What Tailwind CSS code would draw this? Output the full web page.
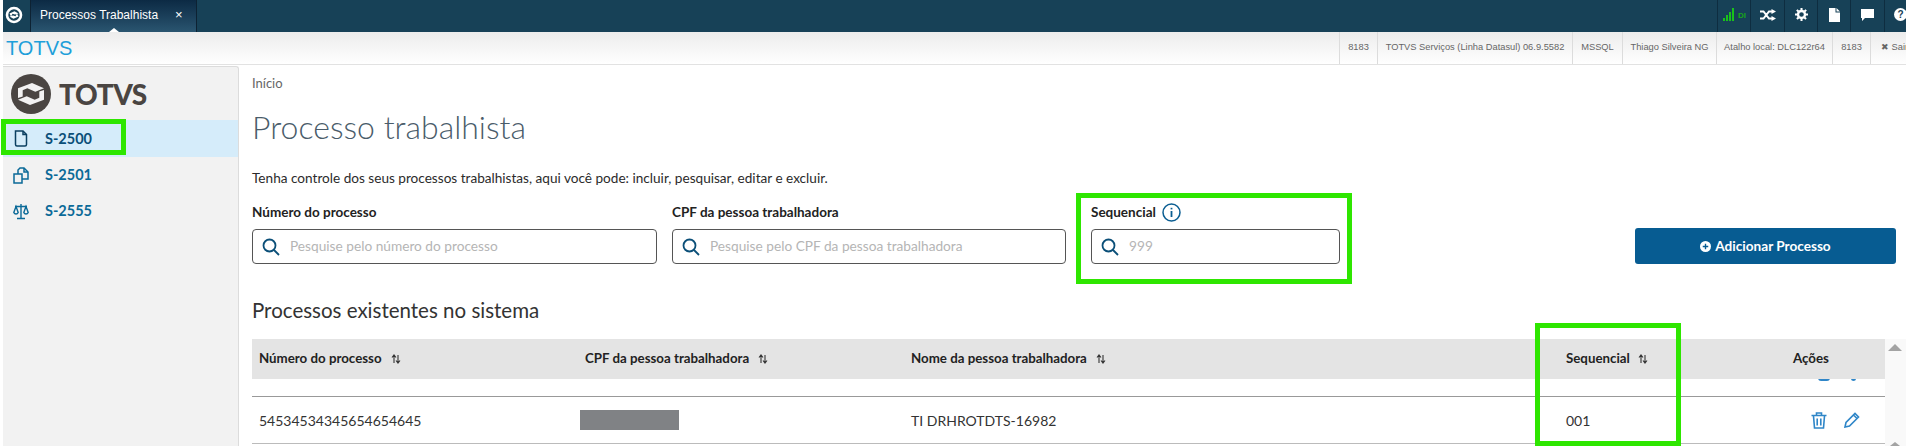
<!DOCTYPE html>
<html lang="pt">
<head>
<meta charset="utf-8">
<script src="https://cdn.jsdelivr.net/npm/@tailwindcss/browser@4"></script>
</head>
<body class="bg-white">
<div class="relative w-[1906px] h-[446px] overflow-hidden bg-white flex flex-col font-['Lato',sans-serif]">

  <!-- top dark bar -->
  <header class="ml-[3px] h-[32px] shrink-0 bg-[#174157] flex items-stretch font-['Liberation_Sans',sans-serif]">
    <div class="w-[27px] flex items-center pl-[2px] pb-[2px]">
      <svg width="18" height="18" viewBox="0 0 18 18"><circle cx="9" cy="9" r="7" fill="none" stroke="#fff" stroke-width="2.600"/><path d="M4.500 7.500 L9.500 5.300 L13.500 7.500 L10 8.500 L7.500 7.800 L6 10.500 Z M13.500 10.500 L8.500 12.700 L4.500 10.500 L8 9.500 L10.500 10.200 L12 7.500 Z" fill="#fff"/></svg>
    </div>
    <div class="relative w-[167px] bg-gradient-to-b from-[#0c2a44] to-[#2a5570] border-x border-[#0d2233] flex items-center pl-[9px] pb-[2px] text-white text-[12px]">
      <span>Processos Trabalhista</span>
      <span class="absolute left-[144px] top-[8px] text-[13px] leading-none">×</span>
      <span class="absolute left-[78px] bottom-0 w-0 h-0 border-x-[5px] border-x-transparent border-b-[4px] border-b-white"></span>
    </div>
    <div class="ml-auto flex items-stretch">
      <div class="w-[33px] border-l border-[#0e2d40] flex items-center pl-[5px] gap-[3px] pb-[4px]">
        <svg width="12" height="13" viewBox="0 0 12 13"><rect x="0" y="10" width="2" height="3" fill="#19c21a"/><rect x="3" y="7" width="2" height="6" fill="#19c21a"/><rect x="6" y="4" width="2" height="9" fill="#19c21a"/><rect x="9" y="0" width="2" height="13" fill="#19c21a"/></svg>
        <span class="text-[8px] text-[#19a81a] font-bold mt-[3px]">DI</span>
      </div>
      <div class="w-[34px] border-l border-[#0e2d40] flex items-center justify-center pb-[3px]">
        <svg width="16" height="12" viewBox="0 0 16 12"><path d="M0 2.500 H3.500 L9 9.500 H12 M0 9.500 H3.500 L9 2.500 H12" fill="none" stroke="#fff" stroke-width="2"/><path d="M11.500 0 L16 2.500 L11.500 5 Z M11.500 7 L16 9.500 L11.500 12 Z" fill="#fff"/></svg>
      </div>
      <div class="w-[33px] border-l border-[#0e2d40] flex items-center justify-center pb-[3px]">
        <svg width="13" height="13" viewBox="0 0 14 14"><circle cx="7" cy="7" r="3.800" fill="none" stroke="#fff" stroke-width="2.600"/><path d="M7 0 V14 M0 7 H14 M2 2 L12 12 M12 2 L2 12" stroke="#fff" stroke-width="2.200" stroke-dasharray="2.400 9.200"/></svg>
      </div>
      <div class="w-[33px] border-l border-[#0e2d40] flex items-center justify-center pb-[3px]">
        <svg width="11" height="14" viewBox="0 0 11 14"><path d="M0 0 H6.500 V4.500 H11 V14 H0 Z M7.500 0 L11 3.500 H7.500 Z" fill="#fff"/></svg>
      </div>
      <div class="w-[34px] border-l border-[#0e2d40] flex items-center justify-center pb-[2px]">
        <svg width="13" height="12" viewBox="0 0 13 12"><path d="M0 0 H13 V9 H4 L1 12 V9 H0 Z" fill="#fff"/></svg>
      </div>
      <div class="w-[22px] border-l border-[#0e2d40] flex items-center pl-[9px] pb-[3px] overflow-hidden">
        <span class="w-[13px] h-[13px] shrink-0 rounded-full bg-white text-[#174157] text-[10px] font-bold leading-[13px] text-center">?</span>
      </div>
    </div>
  </header>

  <!-- second bar -->
  <div class="ml-[3px] h-[33px] shrink-0 bg-gradient-to-b from-[#ececec] to-white border-b border-[#e2e2e2] flex items-stretch font-['Liberation_Sans',sans-serif]">
    <span class="ml-[3px] self-center text-[20px] leading-none text-[#1e9fda]">TOTVS</span>
    <div class="ml-auto flex items-stretch text-[9.300px] text-[#666] whitespace-nowrap">
      <div class="w-[38px] border-l border-[#dcdcdc] flex items-center justify-center">8183</div>
      <div class="w-[195px] border-l border-[#dcdcdc] flex items-center justify-center">TOTVS Serviços (Linha Datasul) 06.9.5582</div>
      <div class="w-[50px] border-l border-[#dcdcdc] flex items-center justify-center">MSSQL</div>
      <div class="w-[94px] border-l border-[#dcdcdc] flex items-center justify-center">Thiago Silveira NG</div>
      <div class="w-[116px] border-l border-[#dcdcdc] flex items-center justify-center">Atalho local: DLC122r64</div>
      <div class="w-[38px] border-l border-[#dcdcdc] flex items-center justify-center">8183</div>
      <div class="w-[36px] border-l border-[#dcdcdc] flex items-center pl-[10px] overflow-hidden"><span>✖&nbsp;Sair</span></div>
    </div>
  </div>

  <!-- body -->
  <div class="flex flex-1 min-h-0 pt-[1px]">
    <!-- sidebar -->
    <aside class="ml-[3px] w-[236px] shrink-0 bg-[#f2f2f2] border-r border-t border-[#dcdcdc] rounded-tr-[3px] flex flex-col">
      <div class="h-[53px] pl-[8px] pt-[7px] flex items-start gap-[8px]">
        <svg width="40" height="40" viewBox="0 0 40 40"><circle cx="20" cy="20" r="20" fill="#4a4542"/><path d="M7 14.300 L21 9 L33 14.300 L24.300 17.700 L16.300 14.300 L11.700 16.300 V22.500 L7 24 Z" fill="#f2f2f2"/><path d="M33 25.700 L19 31 L7 25.700 L15.700 22.300 L23.700 25.700 L28.300 23.700 V17.500 L33 16 Z" fill="#f2f2f2"/></svg>
        <span class="mt-[4px] text-[28px] leading-[32px] font-black tracking-[-0.4px] text-[#4a4542]">TOTVS</span>
      </div>
      <nav class="flex flex-col text-[14.500px] font-bold text-[#0b6a98]">
        <div class="h-[37px] bg-[#d5ecfa] flex items-center pl-[10px] gap-[16px] text-[#0b4f78]">
          <svg width="16" height="17" viewBox="0 0 16 17" fill="none" stroke="#0b3f60" stroke-width="1.500"><path d="M2.500 1 H10 L13.500 4.500 V14.500 A1.500 1.500 0 0 1 12 16 H4 A1.500 1.500 0 0 1 2.500 14.500 Z"/><path d="M10 1 V4.500 H13.500"/></svg>
          <span>S-2500</span>
        </div>
        <div class="h-[36px] flex items-center pl-[10px] gap-[16px]">
          <svg width="16" height="17" viewBox="0 0 16 17" fill="none" stroke="#0b6a98" stroke-width="1.500"><path d="M1 7 H9 V16 H1 Z"/><path d="M5 7 V3 L7 1 H11 L15 5 V12 H9"/><path d="M11 1 V5 H15"/></svg>
          <span>S-2501</span>
        </div>
        <div class="h-[36px] flex items-center pl-[10px] gap-[16px]">
          <svg width="16" height="17" viewBox="0 0 16 17" fill="none" stroke="#0b6a98" stroke-width="1.400"><path d="M8 1 V15 M4 15.500 H12 M2 3.500 H14"/><path d="M3 3.500 L0.800 9.500 A2.400 2.400 0 0 0 5.200 9.500 Z M13 3.500 L10.800 9.500 A2.400 2.400 0 0 0 15.200 9.500 Z"/></svg>
          <span>S-2555</span>
        </div>
      </nav>
    </aside>

    <!-- main -->
    <main class="flex-1 min-w-0 flex flex-col pl-[13px]">
      <p class="mt-[8px] text-[13px] leading-[18px] text-[#666]">Início</p>
      <h1 class="mt-[13px] text-[32px] leading-[44px] font-light text-[#4a5c6a]">Processo trabalhista</h1>
      <p class="mt-[19px] text-[13.600px] leading-[20px] text-[#2b2b2b]">Tenha controle dos seus processos trabalhistas, aqui você pode: incluir, pesquisar, editar e excluir.</p>

      <div class="mt-[14px] flex items-end pr-[10px]">
        <div class="w-[405px]">
          <label class="block text-[13.500px] leading-[20px] font-bold text-[#222]">Número do processo</label>
          <div class="mt-[7px] h-[35px] border border-[#555] rounded-[4px] flex items-center pl-[9px] gap-[10px] text-[13.700px] text-[#b5b5b5]">
            <svg width="18" height="18" viewBox="0 0 18 18" fill="none" stroke="#0b4f78" stroke-width="1.800"><circle cx="7.500" cy="7.500" r="6"/><path d="M12 12 L17 17"/></svg>
            <span>Pesquise pelo número do processo</span>
          </div>
        </div>
        <div class="ml-[15px] w-[394px]">
          <label class="block text-[13.500px] leading-[20px] font-bold text-[#222]">CPF da pessoa trabalhadora</label>
          <div class="mt-[7px] h-[35px] border border-[#555] rounded-[4px] flex items-center pl-[9px] gap-[10px] text-[13.700px] text-[#b5b5b5]">
            <svg width="18" height="18" viewBox="0 0 18 18" fill="none" stroke="#0b4f78" stroke-width="1.800"><circle cx="7.500" cy="7.500" r="6"/><path d="M12 12 L17 17"/></svg>
            <span>Pesquise pelo CPF da pessoa trabalhadora</span>
          </div>
        </div>
        <div class="ml-[25px] w-[249px]">
          <div class="flex items-center gap-[6px] h-[20px]">
            <label class="text-[13.500px] leading-[20px] font-bold text-[#222]">Sequencial</label>
            <svg width="19" height="19" viewBox="0 0 19 19" fill="none" stroke="#0b5e92" stroke-width="1.500"><circle cx="9.500" cy="9.500" r="8.500"/><path d="M9.500 8 V14" stroke-width="1.800"/><path d="M9.500 4.800 V6.400" stroke-width="1.800"/></svg>
          </div>
          <div class="mt-[7px] h-[35px] border border-[#555] rounded-[4px] flex items-center pl-[9px] gap-[10px] text-[13.700px] text-[#b5b5b5]">
            <svg width="18" height="18" viewBox="0 0 18 18" fill="none" stroke="#0b4f78" stroke-width="1.800"><circle cx="7.500" cy="7.500" r="6"/><path d="M12 12 L17 17"/></svg>
            <span>999</span>
          </div>
        </div>
        <button class="ml-auto w-[261px] h-[36px] bg-[#075c92] rounded-[3px] text-white text-[13.600px] font-bold flex items-center justify-center gap-[4px]">
          <svg width="11" height="11" viewBox="0 0 12 12"><circle cx="6" cy="6" r="6" fill="#fff"/><path d="M3 6 H9 M6 3 V9" stroke="#075c92" stroke-width="1.500"/></svg>
          <span>Adicionar Processo</span>
        </button>
      </div>

      <h2 class="mt-[32px] text-[20.500px] leading-[28px] font-normal text-[#333]">Processos existentes no sistema</h2>

      <div class="mt-[15px] flex flex-1 min-h-0">
        <div class="w-[1633px] flex flex-col">
          <div class="relative h-[40px] bg-[#e4e4e4] flex items-center text-[13.300px] font-bold text-[#222] shrink-0">
            <div class="w-[333px] pl-[7px] flex items-center gap-[9px]"><span>Número do processo</span>
              <svg width="10" height="10" viewBox="0 0 10 10" stroke="#333" stroke-width="1.100" fill="none"><path d="M3 9 V1.500 M1 3.500 L3 1 L5 3.500 M7 1 V8.500 M5 6.500 L7 9 L9 6.500"/></svg></div>
            <div class="w-[326px] flex items-center gap-[9px]"><span>CPF da pessoa trabalhadora</span>
              <svg width="10" height="10" viewBox="0 0 10 10" stroke="#333" stroke-width="1.100" fill="none"><path d="M3 9 V1.500 M1 3.500 L3 1 L5 3.500 M7 1 V8.500 M5 6.500 L7 9 L9 6.500"/></svg></div>
            <div class="w-[655px] flex items-center gap-[9px]"><span>Nome da pessoa trabalhadora</span>
              <svg width="10" height="10" viewBox="0 0 10 10" stroke="#333" stroke-width="1.100" fill="none"><path d="M3 9 V1.500 M1 3.500 L3 1 L5 3.500 M7 1 V8.500 M5 6.500 L7 9 L9 6.500"/></svg></div>
            <div class="w-[226px] flex items-center gap-[8px]"><span>Sequencial</span>
              <svg width="10" height="10" viewBox="0 0 10 10" stroke="#333" stroke-width="1.100" fill="none"><path d="M3 9 V1.500 M1 3.500 L3 1 L5 3.500 M7 1 V8.500 M5 6.500 L7 9 L9 6.500"/></svg></div>
            <div class="pl-[1px]"><span>Ações</span></div>
          </div>
          <div class="relative h-[18px] shrink-0 border-b border-[#999] overflow-hidden">
            <div class="absolute left-[1566px] -top-[1px] w-[12px] h-[3px] rounded-b-[3px] bg-[#2f86c8]"></div>
            <div class="absolute left-[1599px] -top-[1px] w-[5px] h-[3px] rounded-b-[3px] bg-[#2f86c8]"></div>
          </div>
          <div class="h-[47px] shrink-0 border-b border-[#bbb] flex items-center text-[14px] text-[#333]">
            <div class="w-[333px] pl-[7px]">54534534345654654645</div>
            <div class="w-[326px]"><div class="-ml-[5px] w-[99px] h-[20px] bg-[#808285]"></div></div>
            <div class="w-[655px]">TI DRHROTDTS-16982</div>
            <div class="w-[226px]">001</div>
            <div class="flex items-center gap-[17px] pl-[19px]">
              <svg width="16" height="17" viewBox="0 0 16 17" fill="none" stroke="#2f86c8" stroke-width="1.600"><path d="M0.500 3.500 H15.500 M5.500 3 V1 H10.500 V3 M2.500 4 L3.500 16 H12.500 L13.500 4 M6.200 6.500 V13.500 M9.800 6.500 V13.500"/></svg>
              <svg width="16" height="16" viewBox="0 0 16 16" fill="none" stroke="#2f86c8" stroke-width="1.600"><path d="M1 15 L2 10.500 L11 1.500 L14.500 5 L5.500 14 Z M9.500 3 L13 6.500"/></svg>
            </div>
          </div>
        </div>
        <!-- scrollbar -->
        <div class="relative w-[21px] bg-[#f9f9f9]">
          <span class="absolute left-[3px] top-[5px] w-0 h-0 border-x-[7px] border-x-transparent border-b-[7px] border-b-[#a3a3a3]"></span>
          <span class="absolute left-[5px] top-[103px] w-0 h-0 border-x-[5px] border-x-transparent border-b-[4px] border-b-[#a3a3a3]"></span>
        </div>
      </div>
    </main>
  </div>

  <!-- green annotation boxes -->
  <div class="absolute left-[1px] top-[119px] w-[125px] h-[36px] border-[5px] border-[#2ee600]"></div>
  <div class="absolute left-[1076px] top-[193px] w-[276px] h-[91px] border-[5px] border-[#2ee600]"></div>
  <div class="absolute left-[1535px] top-[323px] w-[146px] h-[123px] border-[5px] border-[#2ee600]"></div>
</div>
</body>
</html>
